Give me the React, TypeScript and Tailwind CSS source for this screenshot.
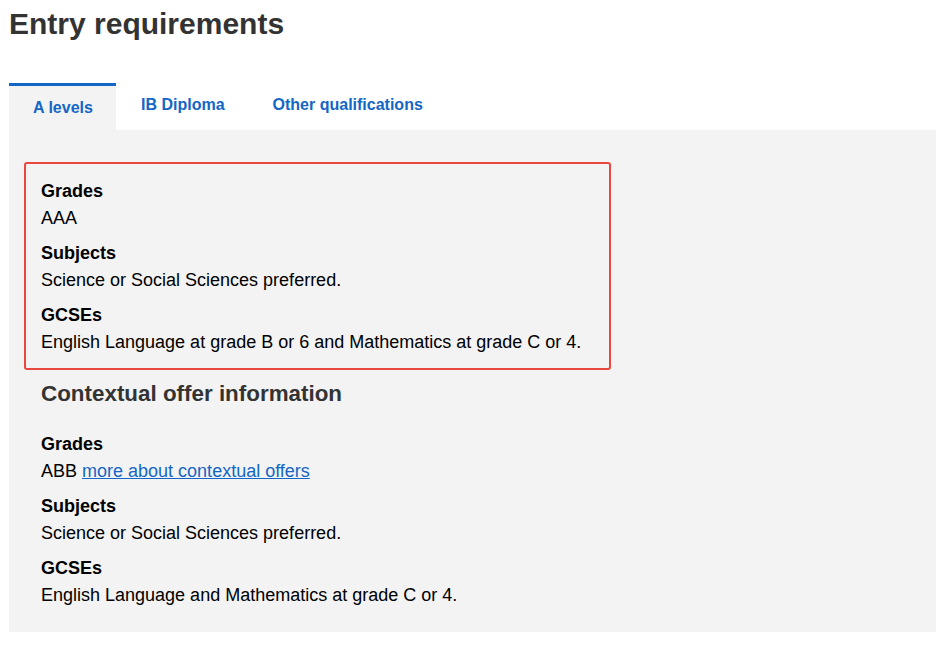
export default function App() {
  const font = { fontFamily: '"Liberation Sans", Arial, sans-serif' };
  const Item = ({ label, children, last }: { label: string; children: React.ReactNode; last?: boolean }) => (
    <div className={last ? "" : "mb-[8px]"}>
      <div className="font-bold text-[18px] leading-[27px] text-black">{label}</div>
      <div className="text-[18px] leading-[27px] text-black">{children}</div>
    </div>
  );
  return (
    <div className="min-h-[649px] bg-white pl-[9px] pr-[13px]" style={font}>
      <h1 className="pt-[6px] text-[30px] leading-[36px] font-bold text-[#333333]">Entry requirements</h1>
      <div className="mt-[41px] flex">
        <div className="w-[107px] border-t-[3px] border-[#1466c6] bg-[#f3f3f3] pl-6 pt-3 pb-3 text-[16px] leading-[20px] font-bold text-[#1466c6]">
          A levels
        </div>
        <div className="pl-[25px] pr-6 pt-3 text-[16px] leading-[20px] font-bold text-[#1466c6]">IB Diploma</div>
        <div className="px-6 pt-3 text-[16px] leading-[20px] font-bold text-[#1466c6]">Other qualifications</div>
      </div>
      <div className="bg-[#f3f3f3] px-[15px] pt-[32px] pb-[23px]">
        <div className="w-[587px] rounded-[3px] border-2 border-[#e8483f] px-[15px] pt-[14px] pb-[12px]">
          <Item label="Grades">AAA</Item>
          <Item label="Subjects">Science or Social Sciences preferred.</Item>
          <Item label="GCSEs" last>
            English Language at grade B or 6 and Mathematics at grade C or 4.
          </Item>
        </div>
        <div className="px-[17px]">
          <h2 className="mt-[9px] text-[22.4px] leading-[30px] font-bold text-[#333333]">Contextual offer information</h2>
          <div className="mt-[22px]">
            <Item label="Grades">
              ABB{" "}
              <a href="#" className="text-[#1466c6] underline">
                more about contextual offers
              </a>
            </Item>
            <Item label="Subjects">Science or Social Sciences preferred.</Item>
            <Item label="GCSEs" last>
              English Language and Mathematics at grade C or 4.
            </Item>
          </div>
        </div>
      </div>
    </div>
  );
}
